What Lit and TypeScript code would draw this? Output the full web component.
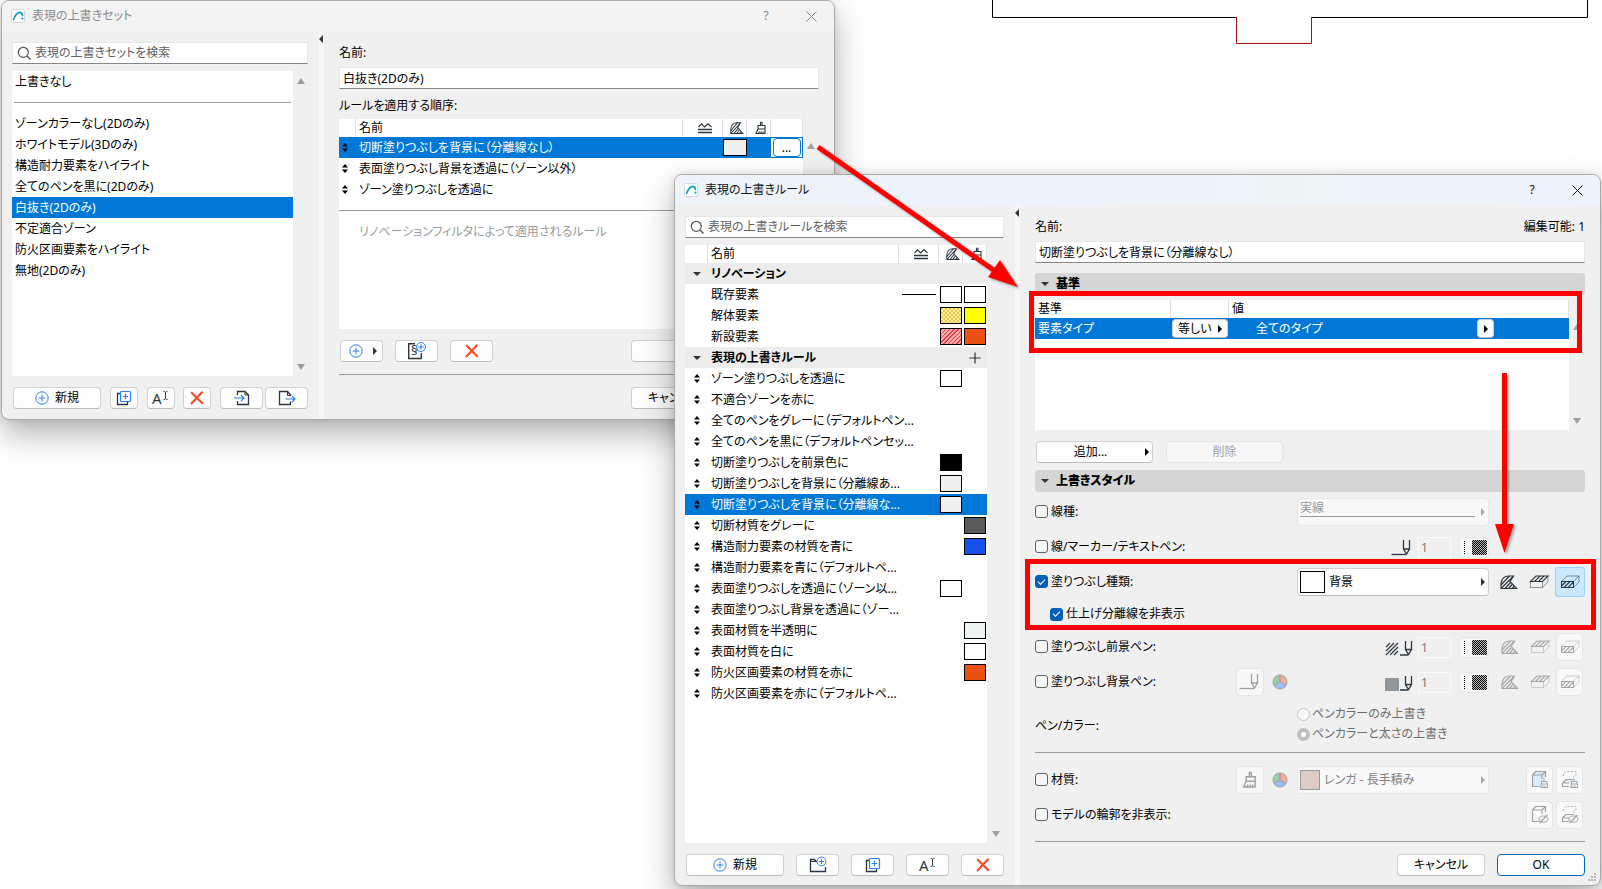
import { LitElement, html, svg, css, nothing } from "lit";
import { customElement, property } from "lit/decorators.js";
import { classMap } from "lit/directives/class-map.js";

const INK = "#2b3640";
const BLUE = "#2b7fff";

const icon = (w: number, h: number, body: unknown) => html`
  <svg width=${w} height=${h} viewBox="0 0 ${w} ${h}" fill="none" aria-hidden="true">${body}</svg>`;

const logo = () => icon(14, 14, svg`
  <rect x="0.5" y="0.5" width="13" height="13" rx="1.500" fill="#fff" stroke="#d4dade"/>
  <path d="M2.500 10.500C4.200 6 6.500 3.500 9 3.300C10.700 3.400 11.200 5 11.400 6.500" stroke="#0a9fc4" stroke-width="1.700" stroke-linecap="round"/>
  <circle cx="11.400" cy="9.600" r="1.100" fill="#0a9fc4"/>`);

const search = () => icon(15, 15, svg`
  <circle cx="6.3" cy="6.3" r="5" stroke="#555" stroke-width="1.2"/>
  <path d="M10 10L13.5 13.5" stroke="#555" stroke-width="1.4"/>`);

const plusCircle = () => icon(14, 14, svg`
  <circle cx="7" cy="7" r="6.2" stroke=${BLUE}/>
  <path d="M7 3.6V10.4M3.6 7H10.4" stroke=${BLUE}/>`);

const duplicate = () => icon(16, 16, svg`
  <path d="M4 3.5H1.5V14.5H11.5V12" stroke=${INK} stroke-width="1.3"/>
  <rect x="4.5" y="1.5" width="10" height="10" rx="1" fill="#fdfdfd" stroke=${BLUE} stroke-width="1.2"/>
  <path d="M9.5 3.8V9.2M6.8 6.5H12.2" stroke=${BLUE} stroke-width="1.2"/>`);

const rename = () => icon(18, 16, svg`
  <text x="0" y="14" font-family="Noto Sans, sans-serif" font-size="15" fill=${INK}>A</text>
  <path d="M11.500 1.500C13 1.500 13.500 2 13.500 2.500C13.500 2 14 1.500 15.500 1.500M13.500 2.500V8.500M11.500 9.500C13 9.500 13.500 9 13.500 8.500C13.500 9 14 9.500 15.500 9.500" stroke=${INK}/>`);

const cross = () => icon(16, 16, svg`
  <path d="M2.2 2.200L13.800 13.800M13.500 1.800L2 14" stroke="#ff4420" stroke-width="2"/>`);

const importDoc = () => icon(18, 18, svg`
  <path d="M4.500 6V2.500H12L15.500 6V15.500H4.500V12" stroke=${INK} stroke-width="1.300"/>
  <path d="M12 2.500V6H15.500" stroke=${INK}/>
  <path d="M1 9H11M8 6L11 9L8 12" stroke=${BLUE} stroke-width="1.200"/>`);

const exportDoc = () => icon(20, 18, svg`
  <path d="M14 6.500L10.500 2.500H2.500V15.500H13.500V12.500" stroke=${INK} stroke-width="1.300"/>
  <path d="M10.500 2.500V6.500H14" stroke=${INK}/>
  <path d="M8.500 10H18M15 7L18 10L15 13" stroke=${BLUE} stroke-width="1.200"/>`);

const sectionPlus = () => icon(20, 18, svg`
  <path d="M8 1.700H1.700V16.500H14.300V11" stroke=${INK} stroke-width="1.400"/>
  <text x="4" y="13" font-family="Noto Sans, sans-serif" font-size="13" fill=${INK}>§</text>
  <circle cx="14" cy="5" r="4.500" fill="#fdfdfd" stroke=${BLUE}/>
  <path d="M14 2.300V7.700M11.300 5H16.700" stroke=${BLUE}/>`);

const folderPlus = () => icon(18, 18, svg`
  <path d="M8 5.500H7L5.500 3.500H1.500V15.500H16.500V11" stroke=${INK} stroke-width="1.300"/>
  <path d="M1.500 5.500H7" stroke=${INK}/>
  <circle cx="12.500" cy="5.500" r="4.400" fill="#fdfdfd" stroke=${BLUE}/>
  <path d="M12.500 3V8M10 5.500H15" stroke=${BLUE}/>`);

const ridge = () => icon(14, 12, svg`
  <path d="M0.500 5L3.500 1.800L6.500 5L7 4.500L10 1.800L13.500 5" stroke=${INK} stroke-width="1.100"/>
  <path d="M0 7.500H14M0 10.500H14" stroke=${INK} stroke-width="1.700"/>`);

const cutFill = (w = 18, h = 14) => html`
  <svg width=${w} height=${h} viewBox="0 0 18 14" fill="none" preserveAspectRatio="none" aria-hidden="true">
    <path d="M1 13.500V8.500C1.500 4 4.500 1 9 1H13.500L10 6.500L16.500 13.500Z" stroke="currentColor" stroke-width="1.200"/>
    <path d="M1 10L9.500 1M1.500 13L13 1.500M5 13.500L10.500 7.500M8.500 13.500L12 9.500M12 13.500L14 11.500" stroke="currentColor" stroke-width="1.200"/>
  </svg>`;

const coverFill = () => icon(20, 14, svg`
  <path d="M1.500 6.500V12.500H13.500V6.500M13.500 12.500L19 7V1" stroke="currentColor" opacity="0.500"/>
  <path d="M1.500 6.500L7 1H19L13.500 6.500ZM5.500 6.500L11 1M9.500 6.500L15 1" stroke="currentColor" stroke-width="1.100"/>`);

const frontFill = () => icon(20, 14, svg`
  <path d="M1.500 6.500L7 1H19V7L13.500 12.500M13.500 6.500L19 1" stroke="currentColor" opacity="0.500"/>
  <path d="M1.500 6.500H13.500V12.500H1.500ZM1.500 11L6 6.500M4 12.500L10 6.500M8 12.500L13.500 7" stroke="currentColor" stroke-width="1.100"/>`);

const brush = (s = 14) => html`
  <svg width=${s} height=${s} viewBox="0 0 14 14" fill="none" aria-hidden="true">
    <path d="M6.500 4.500V1.500Q7.200 0.500 8 1.500V4.500M4 4.500H11V8H4ZM4 8L2 12.500H11V8M4.500 12.500L5.500 10.500M6.700 12.500L7.500 10.500M8.800 12.500L9.300 10.500" stroke="currentColor" stroke-width="1.100"/>
  </svg>`;

const penOnLine = () => icon(22, 18, svg`
  <path d="M0.500 15.500H15" stroke="currentColor" stroke-width="1.300"/>
  <path d="M12.500 1V10L15.500 15L18.500 10V1M12.500 10H18.500" stroke="currentColor" stroke-width="1.300"/>`);

const penOnHatch = () => icon(28, 18, svg`
  <path d="M1 8L5 4M1 12L9 4M1 16L13 4M5 16L13 8M9 16L13 12" stroke=${INK} stroke-width="1.200"/>
  <path d="M15 16H23M20.500 2V10.500L23.500 15.500L26.500 10.500V2M20.500 10.500H26.500" stroke=${INK} stroke-width="1.300"/>`);

const penOnSolid = () => icon(28, 18, svg`
  <rect x="0" y="4" width="14" height="13" fill="#92979b"/>
  <path d="M15 16H23M20.500 2V10.500L23.500 15.500L26.500 10.500V2M20.500 10.500H26.500" stroke=${INK} stroke-width="1.300"/>`);

const colorWheel = () => icon(16, 16, svg`
  <path d="M8 8V1A7 7 0 0 1 14.060 11.500Z" fill="#fba79a"/>
  <path d="M8 8L14.060 11.500A7 7 0 0 1 1.940 11.500Z" fill="#9dbdf8"/>
  <path d="M8 8L1.940 11.500A7 7 0 0 1 8 1Z" fill="#97cdab"/>
  <path d="M8 1V8L14 11.500M8 8L2 11.500" stroke="#999"/>
  <circle cx="8" cy="8" r="7" stroke="#a2a2a2"/>`);

const cubeBack = svg`<path d="M1.500 5L4.500 1.500H14.500V7M1.500 5V16.500H8.500M1.500 5H11V9M11 5L14.500 1.500" stroke="#9fa3a6" stroke-width="1.200"/>`;
const dashedCube = svg`
  <path d="M2.500 6V4L5 1.500H15V5L12 7" stroke="#b0b3b5" stroke-dasharray="2 1.500"/>
  <path d="M1.500 13L5 9.500H12.500M1.500 13V16.500H8M1.500 13H8" stroke="#9fa3a6" stroke-width="1.200"/>`;
const smallBrush = svg`<path d="M13 11V8.500M10.500 11.500H16V14H10.500ZM10.500 14L9.500 17.500H16.500V14M12 17.500V15.500M14 17.500V15.500" fill="#fbfbfb" stroke="#9fa3a6"/>`;
const hiddenEye = svg`<ellipse cx="12.500" cy="14" rx="4.500" ry="3" fill="#fbfbfb" stroke="#9fa3a6"/><path d="M8.500 18L16.500 10" stroke="#9fa3a6" stroke-width="1.200"/>`;

const surfaceAll = () => icon(18, 19, svg`<path d="M2 5L5 2H14V8L11 16H2Z" fill="#d9eaf9"/>${cubeBack}${smallBrush}`);
const surfaceCut = () => icon(18, 19, svg`<path d="M2 13L5 10H12V13Z" fill="#d9eaf9"/>${dashedCube}${smallBrush}`);
const contourAll = () => icon(18, 19, svg`${cubeBack}${hiddenEye}`);
const contourCut = () => icon(18, 19, svg`${dashedCube}${hiddenEye}`);

const tri = (dir: "up" | "down" | "left" | "right") => {
  const d = { up: "M0 6L4 0L8 6Z", down: "M0 0H8L4 6Z", left: "M4 0V8L0 4Z", right: "M0 0V8L4 4Z" }[dir];
  return dir === "up" || dir === "down"
    ? icon(8, 6, svg`<path d=${d} fill="currentColor"/>`)
    : icon(4, 8, svg`<path d=${d} fill="currentColor"/>`);
};
const foldMark = () => icon(8, 4, svg`<path d="M0 0H8L4 4Z" fill="currentColor"/>`);

const grip = () => icon(6, 9, svg`<path d="M0 3.500L3 0L6 3.500ZM0 5.500L3 9L6 5.500Z" fill="#000"/>`);
const plus = () => icon(12, 12, svg`<path d="M6 0.500V11.500M0.500 6H11.500" stroke=${INK} stroke-width="1.200"/>`);
const closeX = () => icon(11, 11, svg`<path d="M0.500 0.500L10.500 10.500M10.500 0.500L0.500 10.500" stroke="currentColor"/>`);

const shared = css`
  :host {
    display: block;
    box-sizing: border-box;
    font: 12px/20px "Noto Sans", "Noto Sans CJK JP", sans-serif;
    font-feature-settings: "palt";
    color: #000;
  }
  *, *::before, *::after { box-sizing: border-box; }
  svg { display: block; flex: none; overflow: visible; }
  button, input, select { font: inherit; font-feature-settings: inherit; color: inherit; margin: 0; }
  .btn {
    display: flex;
    align-items: center;
    justify-content: center;
    gap: 6px;
    height: 22px;
    padding: 0;
    background: #fdfdfd;
    border: 1px solid #d0d0d0;
    border-bottom-color: #bdbdbd;
    border-radius: 4px;
    white-space: nowrap;
  }
  .btn:disabled { background: #f7f7f7; border-color: #e6e6e6; color: #a0a0a0; }
  .btn.default { border-color: #0067c0; }
  .w-icon { width: 28px; }
  .w-tool { width: 43px; }
  .w-dialog { width: 88px; }
  .columns { display: flex; }
  .side { display: flex; flex-direction: column; flex: none; padding: 11px 11px 9px 10px; }
  .splitter { flex: none; width: 5px; background: #f8f8f8; color: #333; }
  .splitter svg { margin-top: 4px; }
  .main { flex: 1; min-width: 0; display: flex; flex-direction: column; padding: 12px 15px 9px; }
  .search {
    display: flex;
    align-items: center;
    gap: 3px;
    height: 22px;
    padding-left: 4px;
    background: #fff;
    border: 1px solid #e6e6e6;
    border-bottom-color: #868686;
  }
  .search input { flex: 1; min-width: 0; height: 20px; border: 0; padding: 0; background: none; outline: none; }
  .search input::placeholder { color: #606060; opacity: 1; }
  .text {
    width: 100%;
    height: 22px;
    padding: 0 3px;
    background: #fff;
    border: 1px solid #e6e6e6;
    border-bottom-color: #868686;
  }
  .scroller { display: flex; margin-top: 7px; flex: 1; }
  .pane { flex: 1; min-width: 0; background: #fff; }
  .bar {
    flex: none;
    width: 16px;
    display: flex;
    flex-direction: column;
    justify-content: space-between;
    align-items: center;
    padding: 7px 0 6px;
    color: #a0a0a0;
  }
  .bar.headed { padding-top: 24px; }
  .tools { display: flex; justify-content: space-between; margin-top: 11px; padding-left: 1px; }
  .rule { height: 1px; border: 0; margin: 0; background: #9c9c9c; }
  table { border-collapse: separate; border-spacing: 0; table-layout: fixed; width: 100%; }
  th, td { padding: 0; text-align: left; font-weight: 400; white-space: nowrap; vertical-align: middle; }
  thead th { height: 18px; line-height: 18px; border-right: 1px solid #e0e0e0; padding-left: 4px; }
  thead th svg { margin: 0 auto; color: #2b3640; }
  td, tbody th { height: 21px; line-height: 21px; }
  td svg { margin: 0 auto; }
  .selected td { background: #0078d7; color: #fff; }
  .swatch { display: block; height: 17px; border: 1px solid #000; margin: 0 1px; }
  th.name, td.name { padding-left: 3px; }
`;

@customElement("dialog-window")
class DialogWindow extends LitElement {
  @property() heading = "";
  @property({ type: Boolean, reflect: true }) active = false;

  static styles = [shared, css`
    :host {
      background: #f0f0f0;
      border: 1px solid #a9a9a9;
      border-radius: 8px;
      overflow: hidden;
      box-shadow: 0 14px 32px rgba(0, 0, 0, 0.3), 0 0 8px rgba(0, 0, 0, 0.1);
      display: flex;
      flex-direction: column;
    }
    .title {
      display: flex;
      align-items: center;
      gap: 7px;
      height: 30px;
      padding: 0 17px 0 9px;
      background: #f3f3f3;
      color: #8c8c8c;
    }
    .title.on { background: linear-gradient(90deg, #eef4f9, #edf2fb 40%, #eef4f6 65%, #edf2fb); color: #111; }
    .title h1 { margin: 0; flex: 1; font: inherit; }
    .title button { border: 0; background: none; padding: 0; display: flex; align-items: center; justify-content: center; width: 12px; height: 20px; }
    .title .help { margin-right: 26px; }
    ::slotted(*) { flex: 1; }
  `];

  render() {
    return html`
      <header class=${classMap({ title: true, on: this.active })}>
        ${logo()}
        <h1>${this.heading}</h1>
        <button class="help" aria-label="ヘルプ">?</button>
        <button aria-label="閉じる">${closeX()}</button>
      </header>
      <slot></slot>`;
  }
}

const SETS = [
  "ゾーンカラーなし(2Dのみ)",
  "ホワイトモデル(3Dのみ)",
  "構造耐力要素をハイライト",
  "全てのペンを黒に(2Dのみ)",
  "白抜き(2Dのみ)",
  "不定適合ゾーン",
  "防火区画要素をハイライト",
  "無地(2Dのみ)",
];

@customElement("override-sets")
class OverrideSets extends LitElement {
  static styles = [shared, css`
    :host { display: flex; }
    .columns { flex: 1; min-width: 0; }
    .side { width: 317px; padding-bottom: 10px; }
    .side .bar { width: 15px; }
    ul { list-style: none; margin: 0; padding: 0; min-height: 305px; }
    li { height: 21px; line-height: 21px; padding-left: 3px; white-space: nowrap; }
    li.on { background: #0078d7; color: #fff; }
    li.gap { display: flex; align-items: center; padding: 0 2px; }
    li.gap .rule { flex: 1; }
    .new { width: 88px; }
    .pair { display: flex; gap: 2px; }
    .label { display: block; }
    .label + .text { margin-top: 4px; }
    .text + .label { margin-top: 7px; }
    .order { flex: none; margin-top: 3px; }
    .order .pane { min-height: 210px; }
    .c-grip { width: 17px; }
    .c-line { width: 40px; }
    .c-icon { width: 24px; }
    .c-more { width: 32px; }
    td .grip { display: block; width: 12px; }
    .more { width: 28px; height: 19px; margin: 0 auto; border-color: #0078d7; }
    .swatch { background: #f0f0f0; margin: 0; }
    .muted { color: #9a9a9a; }
    .selected .more-cell { background: #fff; color: #000; border: 1px solid #0078d7; border-left: 0; }
    .actions { display: flex; gap: 12px; margin-top: 11px; padding-left: 1px; }
    .edit { width: 188px; margin-left: auto; }
    .arrow { color: #333; margin-left: 4px; }
    .main .rule.foot { margin-top: 12px; }
    .add { justify-content: flex-end; padding-right: 5px; }
    .footer { display: flex; justify-content: flex-end; gap: 12px; margin-top: 12px; }
  `];

  render() {
    return html`
      <div class="columns">
        <section class="side">
          <label class="search">${search()}<input type="search" placeholder="表現の上書きセットを検索" aria-label="表現の上書きセットを検索"></label>
          <div class="scroller">
            <ul class="pane" role="listbox" aria-label="表現の上書きセット">
              <li role="option">上書きなし</li>
              <li class="gap" role="presentation"><hr class="rule"></li>
              ${SETS.map((s, i) => html`<li role="option" aria-selected=${i === 4} class=${i === 4 ? "on" : ""}>${s}</li>`)}
            </ul>
            <div class="bar">${tri("up")}${tri("down")}</div>
          </div>
          <div class="tools">
            <button class="btn new">${plusCircle()}新規</button>
            <button class="btn w-icon" aria-label="複製">${duplicate()}</button>
            <button class="btn w-icon" aria-label="名前変更">${rename()}</button>
            <button class="btn w-icon" aria-label="削除">${cross()}</button>
            <div class="pair">
              <button class="btn w-tool" aria-label="読み込み">${importDoc()}</button>
              <button class="btn w-tool" aria-label="書き出し">${exportDoc()}</button>
            </div>
          </div>
        </section>
        <div class="splitter">${tri("left")}</div>
        <section class="main">
          <label class="label" for="set-name">名前:</label>
          <input class="text" id="set-name" .value=${"白抜き(2Dのみ)"}>
          <span class="label">ルールを適用する順序:</span>
          <div class="scroller order">
            <div class="pane">
              <table>
                <colgroup><col class="c-grip"><col><col class="c-line"><col class="c-icon"><col class="c-icon"><col class="c-more"></colgroup>
                <thead>
                  <tr><th></th><th class="name">名前</th><th>${ridge()}</th><th>${cutFill(14, 12)}</th><th>${brush()}</th><th></th></tr>
                </thead>
                <tbody>
                  <tr class="selected">
                    <td><span class="grip">${grip()}</span></td><td class="name">切断塗りつぶしを背景に（分離線なし）</td><td></td>
                    <td><span class="swatch"></span></td><td></td>
                    <td class="more-cell"><button class="btn more">...</button></td>
                  </tr>
                  <tr><td><span class="grip">${grip()}</span></td><td class="name">表面塗りつぶし背景を透過に（ゾーン以外）</td><td></td><td></td><td></td><td></td></tr>
                  <tr><td><span class="grip">${grip()}</span></td><td class="name">ゾーン塗りつぶしを透過に</td><td></td><td></td><td></td><td></td></tr>
                  <tr><td colspan="6"><hr class="rule"></td></tr>
                  <tr><td></td><td class="name muted">リノベーションフィルタによって適用されるルール</td><td></td><td></td><td></td><td></td></tr>
                </tbody>
              </table>
            </div>
            <div class="bar headed">${tri("up")}</div>
          </div>
          <div class="actions">
            <button class="btn w-tool add" aria-label="追加">${plusCircle()}<span class="arrow">${tri("right")}</span></button>
            <button class="btn w-tool" aria-label="新規ルール">${sectionPlus()}</button>
            <button class="btn w-tool" aria-label="ルールを削除">${cross()}</button>
            <button class="btn edit" aria-label="ルールを編集"></button>
          </div>
          <hr class="rule foot">
          <div class="footer">
            <button class="btn w-dialog">キャンセル</button>
            <button class="btn w-dialog default" aria-label="OK"></button>
          </div>
        </section>
      </div>`;
  }
}

type Rule = { name: string; line?: boolean; fill?: string; surface?: string; group?: boolean; fixed?: boolean; add?: boolean; on?: boolean };

const DOTS = "radial-gradient(circle at 1px 1px, #eba94a 0.6px, transparent 0.9px) 0 0 / 4px 4px, radial-gradient(circle at 3px 3px, #eba94a 0.6px, transparent 0.9px) 0 0 / 4px 4px, #fff68c";
const HATCH = "repeating-linear-gradient(135deg, #e0404a 0 1px, #ffaaaa 1px 3px)";

const RULES: Rule[] = [
  { name: "リノベーション", group: true },
  { name: "既存要素", fixed: true, line: true, fill: "#fff", surface: "#fff" },
  { name: "解体要素", fixed: true, fill: DOTS, surface: "#ffff00" },
  { name: "新設要素", fixed: true, fill: HATCH, surface: "#eb5014" },
  { name: "表現の上書きルール", group: true, add: true },
  { name: "ゾーン塗りつぶしを透過に", fill: "#fff" },
  { name: "不適合ゾーンを赤に" },
  { name: "全てのペンをグレーに（デフォルトペン..." },
  { name: "全てのペンを黒に（デフォルトペンセッ..." },
  { name: "切断塗りつぶしを前景色に", fill: "#000" },
  { name: "切断塗りつぶしを背景に（分離線あ...", fill: "#f0f0f0" },
  { name: "切断塗りつぶしを背景に（分離線な...", fill: "#f0f0f0", on: true },
  { name: "切断材質をグレーに", surface: "#595959" },
  { name: "構造耐力要素の材質を青に", surface: "#1450eb" },
  { name: "構造耐力要素を青に（デフォルトペ..." },
  { name: "表面塗りつぶしを透過に（ゾーン以...", fill: "#fff" },
  { name: "表面塗りつぶし背景を透過に（ゾー..." },
  { name: "表面材質を半透明に", surface: "#eef5f0" },
  { name: "表面材質を白に", surface: "#fff" },
  { name: "防火区画要素の材質を赤に", surface: "#eb5014" },
  { name: "防火区画要素を赤に（デフォルトペ..." },
];

@customElement("override-rules")
class OverrideRules extends LitElement {
  static styles = [shared, css`
    :host { display: flex; }
    .columns { flex: 1; min-width: 0; }
    .side { width: 340px; }
    .side .bar { width: 17px; }
    .c-grip { width: 23px; }
    .c-line { width: 40px; }
    .c-icon { width: 24px; }
    .group td { background: #ececec; font-weight: 700; }
    .group svg { color: #333; }
    .line { display: block; height: 1px; margin: 0 3px; background: #000; }
    .new { width: 98px; }
    .row, .head { display: flex; align-items: center; }
    .head { justify-content: space-between; }
    .text { margin-top: 4px; }
    .fold {
      display: flex;
      align-items: center;
      gap: 7px;
      width: 100%;
      height: 22px;
      padding: 0 6px;
      border: 0;
      border-radius: 3px;
      background: #d5d5d5;
      color: #333;
      font-weight: 700;
    }
    .fold b { color: #000; }
    .text + .fold { margin-top: 10px; }
    .row + .fold { margin-top: 7px; }
    .criteria { flex: none; margin-top: 5px; }
    .criteria .pane { min-height: 130px; }
    .c-crit { width: 136px; }
    .c-op { width: 58px; }
    .crit { padding-left: 3px; }
    .op { width: 56px; height: 19px; margin: 0 auto; justify-content: space-between; padding: 0 5px; color: #000; }
    .value { display: flex; align-items: center; padding: 0 75px 0 27px; }
    .value .btn { margin-left: auto; width: 17px; height: 19px; color: #000; }
    .pair { gap: 13px; margin-top: 11px; padding-left: 1px; }
    .pair .btn { position: relative; width: 117px; }
    .pair .btn:first-child { padding-right: 8px; }
    .pair svg { position: absolute; right: 3px; top: 6px; }
    .styles { padding-top: 2px; }
    .style {
      display: grid;
      grid-template-columns: minmax(0, 1fr) 61px 192px 96px;
      align-items: center;
      height: 35px;
    }
    .style.sub { height: 30px; padding-left: 15px; }
    .style.tall { height: 53px; }
    .check { display: flex; align-items: center; gap: 3px; white-space: nowrap; }
    input[type="checkbox"] {
      appearance: none;
      display: grid;
      place-items: center;
      width: 13px;
      height: 13px;
      border: 1px solid #5f5f5f;
      border-radius: 3px;
      background: #f6f6f6;
    }
    input[type="checkbox"]:checked { background: #005fb8; border-color: #005fb8; }
    input[type="checkbox"]:checked::after {
      content: "";
      width: 7px;
      height: 4px;
      border: solid #fff;
      border-width: 0 0 1px 1px;
      transform: rotate(-45deg);
      margin-bottom: 2px;
    }
    input[type="radio"] {
      appearance: none;
      width: 13px;
      height: 13px;
      border: 1px solid #c4c4c4;
      border-radius: 50%;
      background: #f8f8f8;
    }
    input[type="radio"]:checked { border: 4px solid #bfbfbf; background: #fff; }
    .radios { display: flex; flex-direction: column; padding-bottom: 3px; }
    .radios .check { color: #6d6d6d; gap: 2px; }
    .combo {
      display: flex;
      align-items: center;
      gap: 4px;
      height: 28px;
      padding: 0 3px 0 2px;
      background: #fdfdfd;
      border: 1px solid #d0d0d0;
      border-bottom-color: #bdbdbd;
      border-radius: 4px;
      color: #333;
    }
    .combo select { appearance: none; flex: 1; min-width: 0; height: 20px; border: 0; padding: 0; background: none; color: #000; opacity: 1; }
    .combo.off { background: #f8f8f8; border-color: #e6e6e6; color: #a8a8a8; }
    .combo.off select { color: #808080; }
    .stack { flex: 1; display: flex; flex-direction: column; padding-bottom: 6px; }
    .combo .stack select { flex: none; height: 16px; line-height: 16px; color: #9a9a9a; }
    .stack .rule { margin-right: 2px; }
    .chip { flex: none; width: 25px; height: 22px; border: 1px solid #000; background: #fff; }
    .chip.brick { width: 20px; height: 20px; border-color: #999; background: #dfccc6; }
    .aux { display: flex; align-items: center; gap: 8px; color: #a4a7a9; }
    .tile { width: 28px; height: 28px; color: #a4a7a9; }
    .pen { display: flex; align-items: center; justify-content: flex-end; padding-top: 2px; color: #2b3640; }
    .pen input { width: 33px; height: 21px; margin: 0 8px 0 5px; padding: 0 2px; background: #f0f0f0; border: 1px solid #f9f9f9; color: #7a7a7a; }
    .pen .btn { width: 30px; height: 21px; gap: 7px; justify-content: flex-end; padding-right: 1px; }
    .dots { width: 1px; height: 14px; background: repeating-linear-gradient(#000 0 1px, transparent 1px 2px); }
    .checker { width: 15px; height: 15px; background: repeating-conic-gradient(#000 0 25%, #bbb 0 50%) 0 0 / 2px 2px; }
    .views { display: flex; align-items: center; justify-content: flex-end; gap: 3px; color: #2b3640; }
    .views.off { color: #a4a7a9; padding-right: 2px; }
    .view { display: flex; align-items: center; justify-content: center; width: 27px; height: 28px; border: 0; padding: 0; background: none; color: inherit; }
    .view.on { width: 30px; height: 30px; background: #cce8ff; border: 1px solid #99d1ff; border-radius: 3px; }
    .view.flat { border: 1px solid #e6e6e6; border-radius: 4px; background: #f8f8f8; }
    .gap { margin: 0 0 9px; }
    .end { margin-top: 9px; }
    .footer { display: flex; justify-content: flex-end; gap: 12px; margin-top: 12px; }
    .size { position: absolute; right: 3px; bottom: 3px; }
  `];

  private check(id: string, label: string, on = false) {
    return html`<span class="check"><input type="checkbox" id=${id} ?checked=${on}><label for=${id}>${label}</label></span>`;
  }

  private pen(label: string, glyph: unknown) {
    return html`
      <div class="pen">
        ${glyph}
        <input aria-label="${label} 番号" value="1" disabled>
        <button class="btn" disabled aria-label="${label} 色"><span class="dots"></span><span class="checker"></span></button>
      </div>`;
  }

  private views(on: boolean) {
    return html`
      <div class=${classMap({ views: true, off: !on })}>
        <button class="view" ?disabled=${!on} aria-label="切断">${cutFill()}</button>
        <button class="view" ?disabled=${!on} aria-label="表面">${coverFill()}</button>
        <button class=${classMap({ view: true, on, flat: !on })} ?disabled=${!on} aria-label="断面">${frontFill()}</button>
      </div>`;
  }

  private row(r: Rule) {
    return html`
      <tr class=${classMap({ group: !!r.group, selected: !!r.on })}>
        <td>${r.group ? foldMark() : r.fixed ? nothing : grip()}</td>
        <td class="name">${r.name}</td>
        <td>${r.line ? html`<span class="line"></span>` : nothing}</td>
        <td>${r.fill ? html`<span class="swatch" style="background:${r.fill}"></span>` : nothing}</td>
        <td>${r.add ? plus() : r.surface ? html`<span class="swatch" style="background:${r.surface}"></span>` : nothing}</td>
      </tr>`;
  }

  render() {
    return html`
      <div class="columns">
        <section class="side">
          <label class="search">${search()}<input type="search" placeholder="表現の上書きルールを検索" aria-label="表現の上書きルールを検索"></label>
          <div class="scroller">
            <div class="pane">
              <table>
                <colgroup><col class="c-grip"><col><col class="c-line"><col class="c-icon"><col class="c-icon"></colgroup>
                <thead><tr><th></th><th class="name">名前</th><th>${ridge()}</th><th>${cutFill(14, 12)}</th><th>${brush()}</th></tr></thead>
                <tbody>${RULES.map((r) => this.row(r))}</tbody>
              </table>
            </div>
            <div class="bar headed">${tri("up")}${tri("down")}</div>
          </div>
          <div class="tools">
            <button class="btn new">${plusCircle()}新規</button>
            <button class="btn w-tool" aria-label="新規フォルダ">${folderPlus()}</button>
            <button class="btn w-tool" aria-label="複製">${duplicate()}</button>
            <button class="btn w-tool" aria-label="名前変更">${rename()}</button>
            <button class="btn w-tool" aria-label="削除">${cross()}</button>
          </div>
        </section>
        <div class="splitter">${tri("left")}</div>
        <section class="main">
          <div class="head"><label for="rule-name">名前:</label><span>編集可能: 1</span></div>
          <input class="text" id="rule-name" .value=${"切断塗りつぶしを背景に（分離線なし）"}>
          <button class="fold">${foldMark()}<b>基準</b></button>
          <div class="scroller criteria">
            <div class="pane">
              <table>
                <colgroup><col class="c-crit"><col class="c-op"><col></colgroup>
                <thead><tr><th class="name">基準</th><th></th><th class="name">値</th></tr></thead>
                <tbody>
                  <tr class="selected">
                    <td class="crit">要素タイプ</td>
                    <td><button class="btn op">等しい${tri("right")}</button></td>
                    <td><div class="value">全てのタイプ<button class="btn" aria-label="値を選択">${tri("right")}</button></div></td>
                  </tr>
                </tbody>
              </table>
            </div>
            <div class="bar headed">${tri("up")}${tri("down")}</div>
          </div>
          <div class="row pair">
            <button class="btn">追加...${tri("right")}</button>
            <button class="btn" disabled>削除</button>
          </div>
          <button class="fold">${foldMark()}<b>上書きスタイル</b></button>
          <div class="styles">
            <div class="style">
              ${this.check("line", "線種:")}<span></span>
              <div class="combo off"><div class="stack"><select disabled aria-label="線種"><option>実線</option></select><hr class="rule"></div>${tri("right")}</div>
            </div>
            <div class="style">
              ${this.check("line-pen", "線/マーカー/テキストペン:")}<span></span>
              ${this.pen("線ペン", penOnLine())}
            </div>
            <div class="style">
              ${this.check("fill", "塗りつぶし種類:", true)}<span></span>
              <div class="combo"><span class="chip"></span><select aria-label="塗りつぶし種類"><option>背景</option></select>${tri("right")}</div>
              ${this.views(true)}
            </div>
            <div class="style sub">${this.check("skin", "仕上げ分離線を非表示", true)}</div>
            <div class="style">
              ${this.check("fore", "塗りつぶし前景ペン:")}<span></span>
              ${this.pen("前景ペン", penOnHatch())}${this.views(false)}
            </div>
            <div class="style">
              ${this.check("back", "塗りつぶし背景ペン:")}
              <div class="aux"><button class="btn tile" disabled aria-label="背景ペン">${penOnLine()}</button>${colorWheel()}</div>
              ${this.pen("背景ペン", penOnSolid())}${this.views(false)}
            </div>
            <div class="style tall">
              <span>ペン/カラー:</span><span></span>
              <div class="radios">
                <span class="check"><input type="radio" name="pen" id="pen-color" disabled><label for="pen-color">ペンカラーのみ上書き</label></span>
                <span class="check"><input type="radio" name="pen" id="pen-weight" checked disabled><label for="pen-weight">ペンカラーと太さの上書き</label></span>
              </div>
            </div>
            <hr class="rule gap">
            <div class="style">
              ${this.check("surface", "材質:")}
              <div class="aux"><button class="btn tile" disabled aria-label="材質">${brush(18)}</button>${colorWheel()}</div>
              <div class="combo off"><span class="chip brick"></span><select disabled aria-label="材質"><option>レンガ - 長手積み</option></select>${tri("right")}</div>
              <div class="views off">
                <button class="view flat" disabled aria-label="全ての面">${surfaceAll()}</button>
                <button class="view flat" disabled aria-label="切断面">${surfaceCut()}</button>
              </div>
            </div>
            <div class="style">
              ${this.check("contour", "モデルの輪郭を非表示:")}<span></span><span></span>
              <div class="views off">
                <button class="view flat" disabled aria-label="全ての輪郭">${contourAll()}</button>
                <button class="view flat" disabled aria-label="切断輪郭">${contourCut()}</button>
              </div>
            </div>
            <hr class="rule end">
          </div>
          <div class="footer">
            <button class="btn w-dialog">キャンセル</button>
            <button class="btn w-dialog default">OK</button>
          </div>
        </section>
        <div class="size">${icon(9, 9, svg`<path d="M6 0h2v2h-2zM3 3h2v2h-2zM6 3h2v2h-2zM0 6h2v2h-2zM3 6h2v2h-2zM6 6h2v2h-2z" fill="#b4b4b4"/>`)}</div>
      </div>`;
  }
}

@customElement("app-root")
class AppRoot extends LitElement {
  static styles = css`
    :host { display: block; position: relative; min-height: 100vh; overflow: hidden; background: #fff; }
    .canvas, .sets, .rules, .marks { position: absolute; }
    .canvas { left: 992px; top: 0; }
    .sets { left: 1px; top: 0; width: 834px; }
    .rules { left: 674px; top: 174px; right: 1px; }
    .marks { left: 0; top: 0; pointer-events: none; filter: drop-shadow(2px 2px 1px rgba(0, 0, 0, 0.3)); }
    .frames { filter: none; }
  `;

  render() {
    return html`
      <svg class="canvas" width="600" height="50" fill="none" aria-hidden="true">
        <path d="M0.500 0V17.500H245M319 17.500H595.500V0" stroke="#000"/>
        <path d="M244.500 17V43.500H319.500V17" stroke="#b01010"/>
      </svg>
      <dialog-window class="sets" heading="表現の上書きセット"><override-sets></override-sets></dialog-window>
      <dialog-window class="rules" heading="表現の上書きルール" active><override-rules></override-rules></dialog-window>
      <svg class="marks" width="1602" height="889" aria-hidden="true">
        <path d="M818 147L995 271" stroke="#f00" stroke-width="5"/>
        <path d="M1018 287L988 277L1000 260Z" fill="#f00"/>
        <path d="M1504.500 373V528" stroke="#f00" stroke-width="5"/>
        <path d="M1495 524H1514L1504.500 553Z" fill="#f00"/>
      </svg>
      <svg class="marks frames" width="1602" height="889" fill="none" stroke="#f00" stroke-width="5" aria-hidden="true">
        <rect x="1031.500" y="293.500" width="548" height="57"/>
        <rect x="1027.500" y="561.500" width="566" height="66"/>
      </svg>`;
  }
}
